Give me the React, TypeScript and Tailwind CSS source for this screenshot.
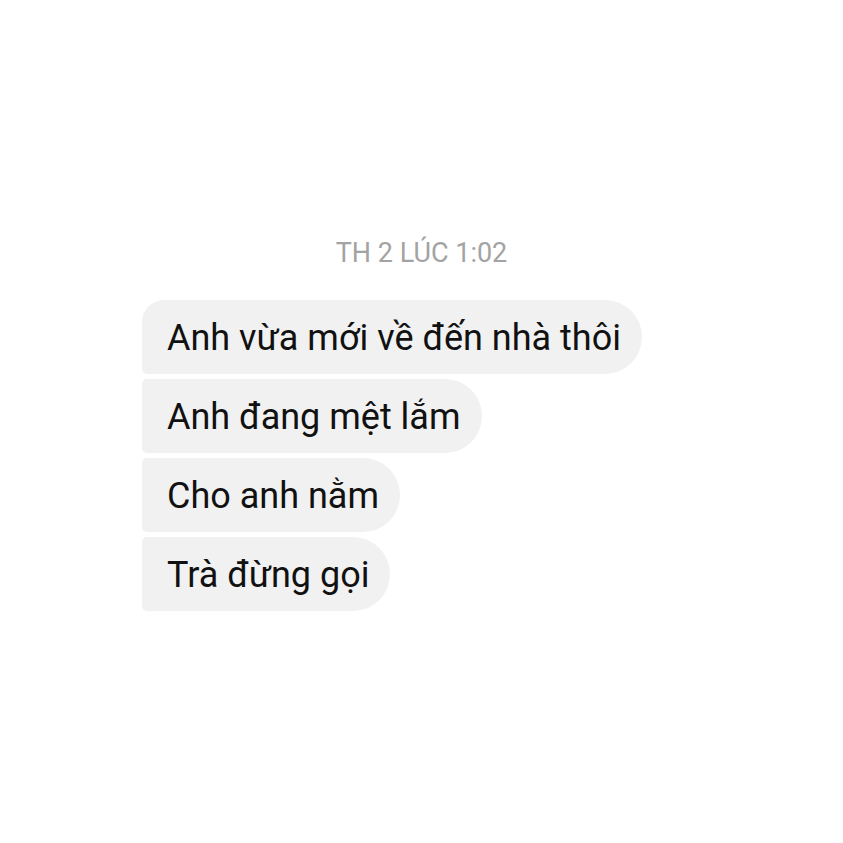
const messages = [
  'Anh vừa mới về đến nhà thôi',
  'Anh đang mệt lắm',
  'Cho anh nằm',
  'Trà đừng gọi',
];

export default function App() {
  return (
    <div className="flex h-[843px] w-[843px] flex-col bg-white pt-[236px] font-['Roboto',sans-serif]">
      <p className="text-center text-[27px] leading-[35px] text-[#a3a3a3]">TH 2 LÚC 1:02</p>
      <div className="mt-[29px] flex flex-col items-start gap-[5px] pl-[142px]">
        {messages.map((m, i) => (
          <div
            key={m}
            className={
              i === 0
                ? 'flex h-[74px] items-center rounded-r-[37px] rounded-tl-[22px] rounded-bl-[5px] bg-[#f1f1f1] pt-[2px] pl-[25px] pr-[21px] text-[36px] text-[#111]'
                : 'flex h-[74px] items-center rounded-r-[37px] rounded-l-[5px] bg-[#f1f1f1] pt-[2px] pl-[25px] pr-[21px] text-[36px] text-[#111]'
            }
          >
            {m}
          </div>
        ))}
      </div>
    </div>
  );
}
